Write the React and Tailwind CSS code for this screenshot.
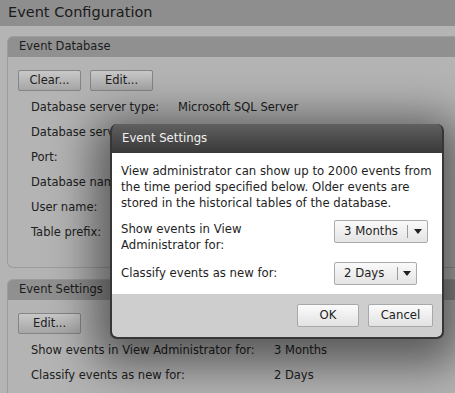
import React from 'react';

const font = { fontFamily: '"DejaVu Sans", Verdana, sans-serif' };

function GrayButton({ children, w }) {
  return (
    <div className={`${w} h-[21px] flex items-center justify-center rounded-[2px] border border-[#858585] bg-gradient-to-b from-[#c9c9c9] to-[#a6a6a6] text-[11.5px] text-[#1e1e1e]`}>
      {children}
    </div>
  );
}

function DialogButton({ children, w }) {
  return (
    <div className={`${w} h-[23px] flex items-center justify-center rounded-[2px] border border-[#a8a8a8] bg-gradient-to-b from-[#fbfbfb] to-[#e2e2e2] text-[11.7px] text-[#1e1e1e]`}>
      {children}
    </div>
  );
}

function Select({ value, w, divider }) {
  return (
    <div className={`${w} h-[23px] flex items-center rounded-[2px] border border-[#ababab] bg-gradient-to-b from-[#fafafa] to-[#e4e4e4] text-[11.7px] text-[#1e1e1e]`}>
      <div className={`${divider} pl-[9px]`}>{value}</div>
      <div className="w-px h-[13px] bg-[#9a9a9a]" />
      <div className="flex-1 flex items-center justify-center">
        <svg width="8" height="5" viewBox="0 0 8 5"><path d="M0 0h8L4 5z" fill="#222" /></svg>
      </div>
    </div>
  );
}

function Row({ label, value, lw }) {
  return (
    <div className="h-[25px] flex items-center pl-[23px] text-[11.5px] text-[#202020]">
      <div className={lw}>{label}</div>
      <div>{value}</div>
    </div>
  );
}

function Panel({ title, children, pb }) {
  return (
    <div className={`ml-[7px] w-[470px] rounded-tl-[6px] rounded-bl-[6px] border border-r-0 border-[#9c9c9c] ${pb}`}>
      <div className="h-[20px] flex items-center pl-[11px] bg-[#909090] rounded-tl-[5px] text-[11.5px] text-[#1c1c1c]">{title}</div>
      {children}
    </div>
  );
}

export default function App() {
  return (
    <div style={font} className="relative w-[455px] h-[393px] overflow-hidden bg-[#b4b4b4]">
      <div className="h-[26px] bg-[#8e8e8e] flex items-center pl-[8px] text-[14.5px] text-[#1a1a1a]">Event Configuration</div>
      <div className="pt-[10px]">
        <Panel title="Event Database" pb="pb-[22px]">
          <div className="flex gap-[9px] pl-[10px] pt-[13px] pb-[4px]">
            <GrayButton w="w-[63px]">Clear...</GrayButton>
            <GrayButton w="w-[63px]">Edit...</GrayButton>
          </div>
          <Row label="Database server type:" value="Microsoft SQL Server" lw="w-[147px]" />
          <Row label="Database server:" value="" lw="w-[147px]" />
          <Row label="Port:" value="" lw="w-[147px]" />
          <Row label="Database name:" value="" lw="w-[147px]" />
          <Row label="User name:" value="" lw="w-[147px]" />
          <Row label="Table prefix:" value="" lw="w-[147px]" />
        </Panel>
        <div className="h-[11px]" />
        <Panel title="Event Settings" pb="pb-[20px]">
          <div className="flex pl-[10px] pt-[13px] pb-[4px]">
            <GrayButton w="w-[63px]">Edit...</GrayButton>
          </div>
          <Row label="Show events in View Administrator for:" value="3 Months" lw="w-[243px]" />
          <Row label="Classify events as new for:" value="2 Days" lw="w-[243px]" />
        </Panel>
      </div>

      <div className="absolute left-[110px] top-[124px] w-[334px] h-[215px] flex flex-col rounded-[7px] border-[2px] border-t-0 border-[#363636] bg-[#363636] shadow-[0_10px_45px_16px_rgba(0,0,0,0.5)] overflow-hidden">
        <div className="h-[29px] flex items-center pl-[10px] bg-gradient-to-b from-[#606060] to-[#393939] text-[11.7px] text-[#f2f2f2]">Event Settings</div>
        <div className="h-[141px] bg-white px-[9px] pt-[10px] text-[11.7px] text-[#1e1e1e]">
          <p className="leading-[16px]">View administrator can show up to 2000 events from the time period specified below. Older events are stored in the historical tables of the database.</p>
          <div className="mt-[9px] flex items-start">
            <div className="w-[213px] leading-[16px] pt-[1px]">Show events in View<br />Administrator for:</div>
            <Select value="3 Months" w="w-[94px]" divider="w-[72px]" />
          </div>
          <div className="mt-[9px] flex items-center">
            <div className="w-[213px]">Classify events as new for:</div>
            <Select value="2 Days" w="w-[83px]" divider="w-[62px]" />
          </div>
        </div>
        <div className="flex-1 bg-[#cecece] flex justify-end gap-[9px] pt-[10px] pr-[9px] rounded-b-[5px]">
          <DialogButton w="w-[62px]">OK</DialogButton>
          <DialogButton w="w-[65px]">Cancel</DialogButton>
        </div>
      </div>
    </div>
  );
}
